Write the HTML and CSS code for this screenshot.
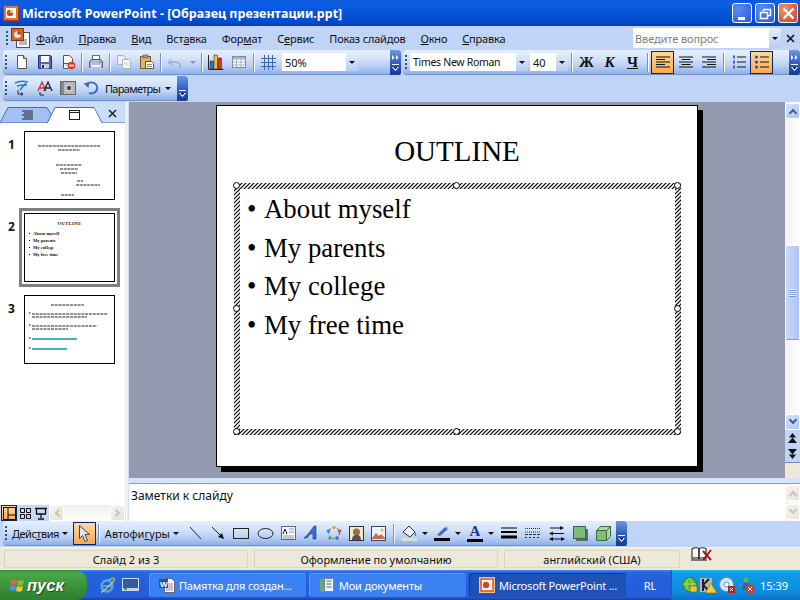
FILE: index.html
```html
<!DOCTYPE html>
<html lang="ru">

<head>
    <meta charset="UTF-8">
    <title>Microsoft PowerPoint</title>
    <link rel="stylesheet" href="styles.css">
</head>

<body>
    <!-- title bar -->
    <div class="titlebar">
        <svg class="app-icon" width="16" height="16" viewBox="0 0 16 16"><rect x="0.5" y="0.5" width="15" height="15" fill="#e8703a" stroke="#a83c14"/><rect x="3" y="3" width="10" height="10" fill="#fff"/><circle cx="7" cy="8" r="3.2" fill="#d0491b"/><path d="M7 8V4.8A3.2 3.2 0 0 1 10.2 8z" fill="#f8c070"/></svg>
        <span class="title-text">Microsoft PowerPoint - [Образец презентации.ppt]</span>
        <div class="win-btns">
            <div class="win-btn"><svg width="19" height="19" viewBox="0 0 19 19"><rect x="5" y="13" width="7" height="3" fill="#fff"/></svg></div>
            <div class="win-btn"><svg width="19" height="19" viewBox="0 0 19 19"><path d="M7.5 5.5h7v6h-3M7.5 5.5v2" fill="none" stroke="#fff" stroke-width="1.5"/><rect x="4.5" y="8.5" width="7" height="6" fill="none" stroke="#fff" stroke-width="1.5"/></svg></div>
            <div class="win-btn win-close"><svg width="19" height="19" viewBox="0 0 19 19"><path d="M4.5 4.5l10 10M14.5 4.5l-10 10" stroke="#fff" stroke-width="2.2"/></svg></div>
        </div>
    </div>

    <!-- menu -->
    <div class="menubar">
        <div class="grip menu-grip"></div>
        <svg class="doc-icon" width="19" height="20" viewBox="0 0 19 20"><rect x="5.5" y="4.5" width="13" height="15" fill="#fff" stroke="#456"/><path d="M8 12h8M8 14h8M8 16h8" stroke="#678"/><rect x="0.5" y="0.5" width="12" height="12" fill="#d4622c" stroke="#8a3010"/><circle cx="6.5" cy="6.5" r="3.5" fill="#fbe0c8"/><path d="M6.5 6.5V3a3.5 3.5 0 0 1 3.5 3.5z" fill="#b93a10"/></svg>
        <div class="menu-items">
            <span class="menu-item"><u>Ф</u>айл</span>
            <span class="menu-item"><u>П</u>равка</span>
            <span class="menu-item"><u>В</u>ид</span>
            <span class="menu-item">Вст<u>а</u>вка</span>
            <span class="menu-item">Фор<u>м</u>ат</span>
            <span class="menu-item">С<u>е</u>рвис</span>
            <span class="menu-item">Показ слай<u>д</u>ов</span>
            <span class="menu-item"><u>О</u>кно</span>
            <span class="menu-item"><u>С</u>правка</span>
        </div>
        <div class="help-box">
            <span class="help-text">Введите вопрос</span>
            <div class="combo-arrow"><i class="arrow-down"></i></div>
        </div>
        <svg class="menu-close" width="9" height="9" viewBox="0 0 9 9"><path d="M1 1l7 7M8 1l-7 7" stroke="#111" stroke-width="1.6"/></svg>
    </div>

    <!-- standard + formatting toolbars -->
    <div class="toolrow">
        <div class="toolbar tb-standard">
            <div class="grip"></div>
            <div class="btn"><svg width="16" height="16" viewBox="0 0 16 16"><path d="M3.5 1.5h6l3 3v10h-9z" fill="#fff" stroke="#555"/><path d="M9.5 1.5v3h3" fill="#dde" stroke="#555"/></svg></div>
            <div class="btn"><svg width="16" height="16" viewBox="0 0 16 16"><path d="M1.5 1.5h12l1 1v12h-13z" fill="#5a62b8" stroke="#2a3068"/><rect x="4" y="2" width="8" height="6" fill="#fff"/><rect x="4" y="10" width="8" height="4.500" fill="#c8cce0"/><rect x="5" y="11" width="2" height="3" fill="#334"/></svg></div>
            <div class="btn"><svg width="16" height="16" viewBox="0 0 16 16"><path d="M3.500 1.500h6l3 3v5h-9z" fill="#fff" stroke="#555"/><path d="M3.500 9v5.500h5" fill="#fff" stroke="#555"/><circle cx="11.500" cy="11.500" r="3.800" fill="#d93a26"/><rect x="9" y="10.700" width="5" height="1.600" fill="#fff"/></svg></div>
            <div class="sep"></div>
            <div class="btn"><svg width="16" height="16" viewBox="0 0 16 16"><path d="M4.500 1.500h7v4h-7z" fill="#fff" stroke="#667"/><path d="M1.500 8l2-2.500h9l2 2.500v5h-13z" fill="#b8bcc8" stroke="#556"/><rect x="3" y="11" width="10" height="2.500" fill="#eef"/><rect x="11" y="7.500" width="2" height="1.500" fill="#3fb03f"/></svg></div>
            <div class="sep"></div>
            <div class="btn"><svg width="16" height="16" viewBox="0 0 16 16"><path d="M1.500 1.500h6l2 2v7h-8z" fill="#eef" stroke="#a8b0c0"/><path d="M6.500 5.500h6l2 2v7h-8z" fill="#fff" stroke="#a8b0c0"/><path d="M8 9h5M8 11h5" stroke="#c0c8d8"/></svg></div>
            <div class="btn"><svg width="16" height="16" viewBox="0 0 16 16"><rect x="1.500" y="2.500" width="10" height="12" fill="#e3b45a" stroke="#7a5a20"/><rect x="4" y="1" width="5" height="3" fill="#999" stroke="#555" stroke-width="0.600"/><path d="M6.500 7.500h6l2 2v5h-8z" fill="#fff" stroke="#555"/><path d="M8 10.500h5M8 12.500h5" stroke="#888"/></svg></div>
            <div class="sep"></div>
            <div class="btn"><svg width="16" height="16" viewBox="0 0 16 16"><path d="M4 5.500L2 8.500l3 2.500M2.500 8h6c3 0 5 1.500 4.500 6" fill="none" stroke="#a9b4c8" stroke-width="2"/></svg></div>
            <div class="btn-arrow"><i class="arrow-down faded"></i></div>
            <div class="sep"></div>
            <div class="btn"><svg width="16" height="16" viewBox="0 0 16 16"><rect x="2" y="7" width="3.500" height="8" fill="#3c6cc4" stroke="#123"  stroke-width="0.500"/><rect x="6" y="1" width="3.500" height="14" fill="#e8c238" stroke="#123" stroke-width="0.500"/><rect x="10" y="4" width="3.500" height="11" fill="#cc3a2c" stroke="#123" stroke-width="0.500"/><path d="M0.500 1v14.500h15" fill="none" stroke="#223"/></svg></div>
            <div class="btn"><svg width="16" height="14" viewBox="0 0 16 14"><rect x="1.500" y="1.500" width="13" height="11" fill="#fff" stroke="#7f8ba0"/><rect x="2" y="2" width="12" height="2.500" fill="#a6b8d8"/><path d="M5.500 4v8M10 4v8M2 7h12M2 10h12" stroke="#a8b4c8"/></svg></div>
            <div class="sep sep-wide"></div>
            <div class="btn"><svg width="15" height="15" viewBox="0 0 15 15"><path d="M0 3.500h15M0 7.500h15M0 11.500h15M3.500 0v15M7.500 0v15M11.500 0v15" stroke="#3f68b4"/></svg></div>
            <div class="combo zoom-combo">
                <span class="combo-text">50%</span>
                <div class="combo-arrow"><i class="arrow-down"></i></div>
            </div>
            <div class="chevron chevron-double">
                <svg width="8" height="5" viewBox="0 0 8 5"><path d="M0 0l2.500 2.500L0 5zM4 0l2.500 2.500L4 5z" fill="#fff"/></svg>
                <svg width="7" height="7" viewBox="0 0 7 7"><path d="M0 0h7v1H0z" fill="#fff"/><path d="M0 3h7L3.500 7z" fill="#fff"/><path d="M1.500 3h4L3.500 5.500z" fill="#111"/></svg>
            </div>
        </div>

        <div class="toolbar tb-format">
            <div class="grip"></div>
            <div class="combo font-combo">
                <span class="combo-text font-name">Times New Roman</span>
                <div class="combo-arrow"><i class="arrow-down"></i></div>
            </div>
            <div class="combo size-combo">
                <span class="combo-text">40</span>
                <div class="combo-arrow"><i class="arrow-down"></i></div>
            </div>
            <div class="sep"></div>
            <div class="btn fmt-letter fmt-bold">Ж</div>
            <div class="btn fmt-letter fmt-italic">К</div>
            <div class="btn fmt-letter fmt-under"><u>Ч</u></div>
            <div class="sep"></div>
            <div class="btn btn-on"><svg width="16" height="13" viewBox="0 0 16 13"><path d="M1 1h14M1 3.500h9M1 6h14M1 8.500h9M1 11h14" stroke="#111"/></svg></div>
            <div class="btn"><svg width="16" height="13" viewBox="0 0 16 13"><path d="M1 1h14M3.500 3.500h9M1 6h14M3.500 8.500h9M1 11h14" stroke="#111"/></svg></div>
            <div class="btn"><svg width="16" height="13" viewBox="0 0 16 13"><path d="M1 1h14M6 3.500h9M1 6h14M6 8.500h9M1 11h14" stroke="#111"/></svg></div>
            <div class="sep"></div>
            <div class="btn"><svg width="16" height="16" viewBox="0 0 16 16"><path d="M6 3h9M6 8h9M6 13h9" stroke="#111"/><path d="M2 1.500h2v3H2zM2 6.500h2v3H2zM2 11.500h2v3H2z" fill="#3f68b4"/></svg></div>
            <div class="btn btn-on"><svg width="16" height="16" viewBox="0 0 16 16"><path d="M6 3h9M6 8h9M6 13h9" stroke="#111"/><circle cx="2.500" cy="3" r="1.500" fill="#234c9c"/><circle cx="2.500" cy="8" r="1.500" fill="#234c9c"/><circle cx="2.500" cy="13" r="1.500" fill="#234c9c"/></svg></div>
            <div class="chevron chevron-double">
                <svg width="8" height="5" viewBox="0 0 8 5"><path d="M0 0l2.500 2.500L0 5zM4 0l2.500 2.500L4 5z" fill="#fff"/></svg>
                <svg width="7" height="7" viewBox="0 0 7 7"><path d="M0 0h7v1H0z" fill="#fff"/><path d="M0 3h7L3.500 7z" fill="#fff"/><path d="M1.500 3h4L3.500 5.500z" fill="#111"/></svg>
            </div>
        </div>
    </div>

    <!-- picture / design toolbar -->
    <div class="toolrow">
        <div class="toolbar tb-design">
            <div class="grip"></div>
            <div class="btn"><svg width="16" height="16" viewBox="0 0 16 16"><path d="M1 3c4-2 9-2 13-1M3 6c3-1 7-1 10-1M12 3L6 10" fill="none" stroke="#2a7ac8" stroke-width="1.500"/><path d="M4 10v4h5M7 12.500L9 14l-2 1.500" fill="none" stroke="#222"/></svg></div>
            <div class="btn"><svg width="16" height="16" viewBox="0 0 16 16"><path d="M1 11L5 2l4 9M2.500 8h5" fill="none" stroke="#d42c2c" stroke-width="1.300"/><path d="M7 11l4-9 4 9M8.500 8h5" fill="none" stroke="#222" stroke-width="1.300"/><path d="M3 12v3h4" fill="none" stroke="#222"/></svg></div>
            <div class="btn"><svg width="16" height="16" viewBox="0 0 16 16"><rect x="0.500" y="1.500" width="15" height="13" fill="#b8b8b8" stroke="#666"/><rect x="1" y="2" width="3" height="12" fill="#888"/><circle cx="9" cy="8" r="3" fill="#555" stroke="#eee"/></svg></div>
            <div class="btn"><svg width="16" height="16" viewBox="0 0 16 16"><path d="M4 4a6 5.500 0 1 1 2 9" fill="none" stroke="#3c6cc4" stroke-width="2"/><path d="M0.500 3.500l6-1.500-1 6z" fill="#3c6cc4"/></svg></div>
            <span class="tb-label params">Параметры</span>
            <i class="arrow-down"></i>
            <div class="chevron">
                <svg width="7" height="7" viewBox="0 0 7 7"><path d="M0 0h7v1H0z" fill="#fff"/><path d="M0 3h7L3.500 7z" fill="#fff"/><path d="M1.500 3h4L3.500 5.500z" fill="#111"/></svg>
            </div>
        </div>
    </div>

    <!-- main area -->
    <div class="work">
        <div class="left-pane">
            <svg class="tabs" width="125" height="21" viewBox="0 0 125 21">
                <rect width="125" height="21" fill="#c9dcf9"/>
                <path d="M0 21L8 5.500H47L52 14 49 21z" fill="#a3c0f5" stroke="#3f6cb6"/>
                <path d="M47 21.500L55 5.500H94L102 21H125" fill="#fff" stroke="#3f6cb6"/>
                <path d="M48 21l8-15h38l7 15z" fill="#fff"/>
                <path d="M22 9h11M24 11h9M22 13h11M24 15h9M22 17h11" stroke="#222"/>
                <rect x="69.500" y="8.500" width="10" height="9" fill="#fff" stroke="#222"/>
                <path d="M70 10.500h9" stroke="#222"/>
                <path d="M109 8l7 7M116 8l-7 7" stroke="#222" stroke-width="1.500"/>
            </svg>

            <div class="thumbs">
                <div class="thumb-row">
                    <span class="thumb-num">1</span>
                    <div class="thumb-frame">
                        <svg class="thumb" width="91" height="69" viewBox="0 0 91 69">
                            <rect x="0.500" y="0.500" width="90" height="68" fill="#fff" stroke="#000"/>
                            <g stroke="#222" stroke-width="1.100" stroke-dasharray="3 0.700">
                                <path d="M14 15h62M34 19h22M32 34h26M36 38h18M37 42h16M53 50h6M52 54h24M37 64h13"/>
                            </g>
                        </svg>
                    </div>
                </div>
                <div class="thumb-row">
                    <span class="thumb-num">2</span>
                    <div class="thumb-frame frame-on">
                        <div class="thumb thumb-mini">
                            <div class="mini-title">OUTLINE</div>
                            <div class="mini-line">About myself</div>
                            <div class="mini-line">My parents</div>
                            <div class="mini-line">My college</div>
                            <div class="mini-line">My free time</div>
                        </div>
                    </div>
                </div>
                <div class="thumb-row">
                    <span class="thumb-num">3</span>
                    <div class="thumb-frame">
                        <svg class="thumb" width="91" height="69" viewBox="0 0 91 69">
                            <rect x="0.500" y="0.500" width="90" height="68" fill="#fff" stroke="#000"/>
                            <g stroke="#222" stroke-width="1.100" stroke-dasharray="3 0.800">
                                <path d="M27 10h33M8 19h76M8 22h55M8 31h65M8 34h36"/>
                            </g>
                            <path d="M8 44h45M8 54h35" stroke="#0a9a9a" stroke-width="1.500"/>
                            <path d="M5 18h1.500M5 30h1.500M5 43h1.500M5 53h1.500" stroke="#000"/>
                        </svg>
                    </div>
                </div>
            </div>

            <div class="viewbar">
                <div class="view-btn view-on"><svg width="13" height="13" viewBox="0 0 13 13"><rect x="0.500" y="0.500" width="12" height="12" fill="none" stroke="#111"/><path d="M5 1v11M5 8h7" stroke="#111"/></svg></div>
                <div class="view-btn"><svg width="13" height="13" viewBox="0 0 13 13"><path d="M1.500 1.500h4v4h-4zM7.500 1.500h4v4h-4zM1.500 7.500h4v4h-4zM7.500 7.500h4v4h-4z" fill="none" stroke="#111"/></svg></div>
                <div class="view-btn"><svg width="14" height="13" viewBox="0 0 14 13"><path d="M1 1.500h12M2.500 2v5h9V2M7 7v4M4 12h6" fill="none" stroke="#111" stroke-width="1.300"/></svg></div>
                <div class="hscroll">
                    <div class="sb-btn sb-disabled"><i class="chev chev-left"></i></div>
                    <div class="sb-btn sb-disabled"><i class="chev chev-right"></i></div>
                </div>
            </div>
        </div>

        <div class="v-split"></div>

        <div class="right-pane">
            <div class="editor">
                <div class="canvas">
                    <div class="slide">
                        <h1 class="slide-title">OUTLINE</h1>
                        <div class="sel-box">
                            <svg class="hatch" width="447" height="252">
                                <defs>
                                    <pattern id="hatch-lines" width="4" height="4" patternUnits="userSpaceOnUse">
                                        <path d="M-1 1L1 -1M0 4L4 0M3 5L5 3" stroke="#000" stroke-width="1.200"/>
                                    </pattern>
                                </defs>
                                <rect width="447" height="252" fill="#fff"/>
                                <rect width="447" height="252" fill="url(#hatch-lines)"/>
                            </svg>
                            <ul class="slide-list">
                                <li>About myself</li>
                                <li>My parents</li>
                                <li>My college</li>
                                <li>My free time</li>
                            </ul>
                            <i class="handle h-tl"></i><i class="handle h-tc"></i><i class="handle h-tr"></i>
                            <i class="handle h-ml"></i><i class="handle h-mr"></i>
                            <i class="handle h-bl"></i><i class="handle h-bc"></i><i class="handle h-br"></i>
                        </div>
                    </div>
                </div>
                <div class="vscroll">
                    <div class="sb-btn sb-top"><i class="chev chev-up"></i></div>
                    <div class="sb-track">
                        <div class="sb-thumb"><i class="thumb-lines"></i></div>
                    </div>
                    <div class="sb-btn"><i class="chev chev-down"></i></div>
                    <div class="slide-nav">
                        <svg width="9" height="10" viewBox="0 0 9 10"><path d="M4.500 0l3.500 4.500H1zM4.500 4.500L9 10H0z" fill="#111"/></svg>
                        <svg width="9" height="10" viewBox="0 0 9 10"><path d="M0 0h9L4.500 5.500zM1 5.500h7L4.500 10z" fill="#111"/></svg>
                    </div>
                    <div class="sb-foot"></div>
                </div>
            </div>
            <div class="h-split"></div>
            <div class="notes">
                <span class="notes-text">Заметки к слайду</span>
                <div class="notes-scroll">
                    <div class="sb-btn sb-disabled"><i class="chev chev-up"></i></div>
                    <div class="sb-btn sb-disabled"><i class="chev chev-down"></i></div>
                </div>
            </div>
        </div>
    </div>

    <!-- drawing toolbar -->
    <div class="toolrow draw-row">
        <div class="toolbar tb-draw">
            <div class="grip"></div>
            <span class="tb-label actions">Дейс<u>т</u>вия</span>
            <i class="arrow-down"></i>
            <div class="btn btn-on btn-cursor"><svg width="13" height="19" viewBox="0 0 13 19"><path d="M1.500 1.500v13l3-3 2.500 6 2.500-1-2.500-6h4.500z" fill="#dfe4ee" stroke="#445"/></svg></div>
            <div class="sep"></div>
            <span class="tb-label autoshapes">Автофи<u>г</u>уры</span>
            <i class="arrow-down"></i>
            <div class="draw-tools">
                <svg width="16" height="16" viewBox="0 0 16 16"><path d="M3 2l11 12" stroke="#222"/></svg>
                <svg width="16" height="16" viewBox="0 0 16 16"><path d="M2 2l9 9" stroke="#222"/><path d="M14 14l-6-2 4-4z" fill="#111"/></svg>
                <svg width="17" height="13" viewBox="0 0 17 13"><rect x="0.500" y="1.500" width="15" height="10" fill="none" stroke="#222"/></svg>
                <svg width="17" height="13" viewBox="0 0 17 13"><ellipse cx="8.500" cy="6.500" rx="7.500" ry="5" fill="none" stroke="#222"/></svg>
                <svg width="15" height="14" viewBox="0 0 15 14"><rect x="0.500" y="0.500" width="14" height="13" fill="#f4f6fb" stroke="#667"/><path d="M2 8l2-5 2 5" fill="none" stroke="#123"/><path d="M8 3h5M8 6h5M2 10h11M2 12h11" stroke="#99a"/></svg>
                <svg width="16" height="16" viewBox="0 0 16 16"><path d="M1 13C5 10 8 5 11 1h2v13h-3V9H7l-3 4z" fill="#3c6cc4" stroke="#1a3a80" stroke-width="0.600"/></svg>
                <svg width="16" height="16" viewBox="0 0 16 16"><circle cx="8" cy="8" r="5.500" fill="none" stroke="#556" stroke-dasharray="2 2"/><circle cx="8" cy="2.500" r="1.800" fill="#e8a53a"/><circle cx="13.500" cy="6" r="1.800" fill="#d4503c"/><circle cx="11" cy="13" r="1.800" fill="#5a62b8"/><circle cx="4" cy="13" r="1.800" fill="#5aa85a"/><circle cx="2.500" cy="6" r="1.800" fill="#3c8cc4"/></svg>
                <svg width="15" height="15" viewBox="0 0 15 15"><rect x="0.500" y="0.500" width="14" height="14" fill="#f6e6c8" stroke="#334"/><circle cx="7.500" cy="6" r="3.500" fill="#9a6a50"/><path d="M3 14c0-4 2-5 4.500-5s4.500 1 4.500 5z" fill="#555"/></svg>
                <svg width="15" height="15" viewBox="0 0 15 15"><rect x="0.500" y="0.500" width="14" height="14" fill="#eef2fa" stroke="#445"/><path d="M1 12l4-5 3 3 2-2 4 4v1H1z" fill="#c86a5a"/><circle cx="11" cy="4" r="1.500" fill="#e8c238"/></svg>
            </div>
            <div class="sep draw-sep"></div>
            <svg class="fill-ic" width="15" height="16" viewBox="0 0 15 16"><rect x="0" y="13" width="15" height="3" fill="#cfe6d6"/><path d="M1 7l6-6 6 6-5 5z" fill="#eef" stroke="#334"/><path d="M13 7c1.500 2 1.500 4 .5 4s-1-2-.5-4z" fill="#3c6cc4"/></svg>
            <i class="arrow-down ad-fill"></i>
            <svg class="pen-ic" width="16" height="16" viewBox="0 0 16 16"><path d="M3 10l8-8 3 2-8 7z" fill="#3c6cc4"/><path d="M11 2l3 2 1-2-2-1z" fill="#e8c238"/><rect x="0" y="13" width="16" height="3" fill="#000"/></svg>
            <i class="arrow-down ad-pen"></i>
            <div class="font-color-ic"><span class="fc-letter">A</span><i class="fc-bar"></i></div>
            <i class="arrow-down ad-font"></i>
            <svg class="line-ic" width="16" height="12" viewBox="0 0 16 12"><path d="M0 1h16" stroke="#000"/><path d="M0 5h16" stroke="#000" stroke-width="2"/><path d="M0 10h16" stroke="#000" stroke-width="3"/></svg>
            <svg class="dash-ic" width="16" height="12" viewBox="0 0 16 12"><path d="M0 1.500h16M0 5h16" stroke="#333" stroke-dasharray="1 1"/><path d="M0 7.500h16" stroke="#333" stroke-dasharray="3 1"/><path d="M0 10.500h16" stroke="#333" stroke-dasharray="2 2"/></svg>
            <svg class="arrows-ic" width="16" height="15" viewBox="0 0 16 15"><path d="M1 2h13M1 7.500h14M1 13h14" stroke="#111"/><path d="M15 2l-4-2v4zM0 7.500l4-2v4zM0 13l4-2v4zM16 13l-4-2v4z" fill="#111"/></svg>
            <svg class="shadow-ic" width="15" height="15" viewBox="0 0 15 15"><rect x="3" y="3" width="12" height="12" fill="#667"/><rect x="0.500" y="0.500" width="12" height="12" fill="#7cbc7c" stroke="#3a6a3a"/></svg>
            <svg class="cube-ic" width="15" height="15" viewBox="0 0 15 15"><path d="M0.500 4.500l4-4h10v10l-4 4h-10z" fill="#a8d8a8" stroke="#3a6a3a"/><path d="M0.500 4.500h10v10M10.500 4.500l4-4" fill="none" stroke="#3a6a3a"/><rect x="1" y="5" width="9" height="9" fill="#7cbc7c"/></svg>
            <div class="chevron">
                <svg width="7" height="7" viewBox="0 0 7 7"><path d="M0 0h7v1H0z" fill="#fff"/><path d="M0 3h7L3.500 7z" fill="#fff"/><path d="M1.500 3h4L3.500 5.500z" fill="#111"/></svg>
            </div>
        </div>
    </div>

    <!-- status bar -->
    <div class="statusbar">
        <div class="st-panel st-1">Слайд 2 из 3</div>
        <div class="st-panel st-2">Оформление по умолчанию</div>
        <div class="st-panel st-3">английский (США)</div>
        <div class="st-panel st-4">
            <svg width="21" height="15" viewBox="0 0 21 15"><path d="M1 1.500c3-1 5-1 7 0v10c-2-1-4-1-7 0zM8 1.500c2-1 5-1 7 0v10c-2-1-5-1-7 0z" fill="#fff" stroke="#111"/><path d="M0 13h16" stroke="#111"/><path d="M12 4l8 9M20 3l-8 10" stroke="#a01818" stroke-width="2"/></svg>
        </div>
    </div>

    <!-- taskbar -->
    <div class="taskbar">
        <div class="start">
            <svg width="16" height="15" viewBox="0 0 16 15"><path d="M1 2c2-1 4-1 6 0l-1 5C4 6 2 6 0 7z" fill="#e8603c"/><path d="M8 2c2 1 4 1 6 0l-1 5c-2 1-4 1-6 0z" fill="#7cc040"/><path d="M0 8c2-1 4-1 6 0l-1 5c-2-1-4-1-6 0z" fill="#4c90e8"/><path d="M7 8c2 1 4 1 6 0l-1 5c-2 1-4 1-6 0z" fill="#f0c830"/></svg>
            <span class="start-text">пуск</span>
        </div>
        <div class="quick">
            <svg width="17" height="17" viewBox="0 0 17 17"><circle cx="8" cy="9" r="5.500" fill="none" stroke="#4aa8f0" stroke-width="2.500"/><path d="M2 9h11" stroke="#4aa8f0" stroke-width="2"/><path d="M3 14C1 17 5 14 14 5c3-4 0-5-4-2" fill="none" stroke="#e8c238" stroke-width="1.200"/></svg>
            <svg width="17" height="14" viewBox="0 0 17 14"><rect x="0.500" y="0.500" width="16" height="12" fill="#2c5f9c" stroke="#cfd8e8"/><path d="M1 10h15v2H1z" fill="#c8d0dc"/><rect x="2" y="10" width="3" height="2" fill="#4c9c4c"/></svg>
        </div>
        <div class="task">
            <svg width="16" height="16" viewBox="0 0 16 16"><path d="M5.500 1.500h7l3 3v11h-10z" fill="#fff" stroke="#667"/><path d="M7 7h7M7 9h7M7 11h7M7 13h7" stroke="#88a"/><rect x="0" y="2" width="9" height="9" fill="#2a4ea8"/><text class="w-letter" x="1" y="9.500">W</text></svg>
            <span class="task-text">Памятка для создан...</span>
        </div>
        <div class="task">
            <svg width="16" height="16" viewBox="0 0 16 16"><path d="M1 2l5-1v14l-5-1z" fill="#62a87c"/><rect x="5.500" y="1.500" width="9" height="13" fill="#eef3fb" stroke="#788"/><path d="M7.500 4h5M7.500 7h5M7.500 10h5" stroke="#567"/></svg>
            <span class="task-text">Мои документы</span>
        </div>
        <div class="task task-on">
            <svg width="16" height="16" viewBox="0 0 16 16"><rect x="0.500" y="0.500" width="15" height="15" fill="#e8703a" stroke="#f6c0a0"/><rect x="3" y="3" width="10" height="10" fill="#fff"/><circle cx="7" cy="8" r="3.200" fill="#d0491b"/></svg>
            <span class="task-text">Microsoft PowerPoint ...</span>
        </div>
        <div class="lang">RL</div>
        <div class="tray">
            <svg width="16" height="16" viewBox="0 0 16 16"><circle cx="7.500" cy="7.500" r="7" fill="#5cb82c" stroke="#2e7a1a"/><path d="M1 7h13M7.500 1c-4 4-4 9 0 13M7.500 1c4 4 4 9 0 13" fill="none" stroke="#c8f0a0" stroke-width="0.700"/><rect x="8" y="9" width="7" height="6" rx="1" fill="#f0c830" stroke="#806010" stroke-width="0.600"/></svg>
            <svg width="17" height="16" viewBox="0 0 17 16"><rect x="0" y="1" width="12" height="14" fill="#b8b8b0"/><path d="M3 2v12M3 8l6-6M3 8l6 6" stroke="#222" stroke-width="2" fill="none"/><path d="M11 6l6 10H5z" fill="#f0d040" stroke="#806010" stroke-width="0.600"/></svg>
            <svg width="17" height="16" viewBox="0 0 17 16"><circle cx="7.500" cy="7.500" r="7" fill="#d8e8f8" stroke="#5a90c8"/><circle cx="7.500" cy="7.500" r="2.500" fill="#fff" stroke="#5a90c8"/><rect x="9" y="9" width="7" height="7" fill="#a82828"/><path d="M11 11l3 3M14 11l-3 3" stroke="#fff"/></svg>
            <svg width="17" height="17" viewBox="0 0 17 17"><circle cx="8" cy="3" r="2.500" fill="#5cb82c"/><circle cx="3" cy="8" r="2.500" fill="#3c8cc4"/><path d="M5 6l6 0-1 7H4z" fill="#2a6aa8"/><circle cx="12" cy="12" r="4.500" fill="#d83828"/><path d="M10 10l4 4M14 10l-4 4" stroke="#fff"/></svg>
            <span class="clock">15:39</span>
        </div>
    </div>
</body>

</html>
```

FILE: styles.css
```css
* {
    margin: 0;
    padding: 0;
    box-sizing: border-box;
}

body {
    width: 800px;
    height: 600px;
    overflow: hidden;
    display: flex;
    flex-direction: column;
    background-color: #bfd4f6;
    font-family: "Noto Sans", "DejaVu Sans", sans-serif;
    font-size: 11px;
    color: #111;
}

svg {
    display: block;
    flex: none;
}

/* title bar */
.titlebar {
    height: 26px;
    flex: none;
    display: flex;
    align-items: center;
    padding: 0 2px 0 3px;
    background: linear-gradient(#0a57d6 0, #0a5fe4 8%, #0553d8 55%, #0349c8 88%, #013ea8 100%);
}

.title-text {
    margin-left: 3px;
    color: #fff;
    font-family: "Noto Sans", sans-serif;
    font-size: 12.5px;
    font-weight: bold;
    white-space: nowrap;
}

.win-btns {
    margin-left: auto;
    display: flex;
    gap: 3px;
}

.win-btn {
    width: 20px;
    height: 20px;
    border: 1px solid #fff;
    border-radius: 3px;
    background: radial-gradient(circle at 30% 30%, #5c8cf0, #2a5ad8);
}

.win-close {
    background: radial-gradient(circle at 30% 30%, #ec9070, #d0441c);
}

/* menu */
.menubar {
    height: 24px;
    flex: none;
    display: flex;
    align-items: center;
    padding-left: 6px;
    background-color: #bfd4f6;
}

.menu-grip {
    height: 12px;
}

.doc-icon {
    margin-left: 3px;
}

.menu-items {
    display: flex;
    gap: 15px;
    margin-left: 6px;
    letter-spacing: -0.2px;
    white-space: nowrap;
}

.help-box {
    width: 148px;
    height: 20px;
    margin-left: auto;
    margin-right: 5px;
    display: flex;
    align-items: center;
    background-color: #fff;
    padding-left: 2px;
    letter-spacing: -0.1px;
}

.help-text {
    color: #7f7f7f;
    flex: 1;
}

.menu-close {
    margin-right: 5px;
}

/* toolbars */
.toolrow {
    height: 26px;
    flex: none;
    display: flex;
    gap: 2px;
    padding-left: 3px;
}

.toolbar {
    height: 25px;
    display: flex;
    align-items: center;
    padding-left: 2px;
    border-radius: 4px 0 0 4px;
    background: linear-gradient(#e6f0fe 0, #d4e3fb 35%, #b6cdf4 70%, #8fb0e6 100%);
    border-bottom: 1px solid #6f8fcf;
}

.tb-standard {
    width: 398px;
}

.tb-format {
    width: 397px;
}

.tb-design {
    width: 185px;
}

.grip {
    width: 2px;
    height: 15px;
    flex: none;
    background: repeating-linear-gradient(#2a4f98 0 2px, transparent 2px 4px);
}

.btn {
    width: 23px;
    height: 23px;
    flex: none;
    display: flex;
    align-items: center;
    justify-content: center;
}

.tb-standard .grip,
.tb-design .grip {
    margin-right: 3px;
}

.tb-draw .grip {
    margin-right: 5px;
}

.btn-on {
    background: linear-gradient(#ffd9a0, #fba850);
    border: 1px solid #0a2468;
}

.btn-arrow {
    width: 13px;
    display: flex;
    justify-content: center;
}

.sep {
    width: 1px;
    height: 19px;
    flex: none;
    margin: 0 2px;
    background-color: #6f8fcf;
    box-shadow: 1px 0 0 #fff;
}

.sep-wide {
    margin: 0 3px;
}

.arrow-down {
    width: 0;
    height: 0;
    flex: none;
    display: block;
    border-left: 3px solid transparent;
    border-right: 3px solid transparent;
    border-top: 3px solid #111;
}

.faded {
    border-top-color: #8a98b0;
}

.combo {
    height: 18px;
    display: flex;
    align-items: center;
    background-color: #fff;
    flex: none;
}

.combo-text {
    flex: 1;
    padding-left: 3px;
    font-size: 11px;
    white-space: nowrap;
}

.font-name {
    font-size: 10.5px;
    letter-spacing: -0.3px;
}

.combo-arrow {
    width: 12px;
    height: 100%;
    flex: none;
    display: flex;
    align-items: center;
    justify-content: center;
    background: linear-gradient(#e4edfb, #b8cdf0);
}

.zoom-combo {
    width: 76px;
    margin-left: 2px;
}

.font-combo {
    width: 118px;
    margin-left: 3px;
}

.size-combo {
    width: 38px;
    margin-left: 2px;
}

.chevron {
    width: 11px;
    height: 25px;
    margin-left: auto;
    flex: none;
    display: flex;
    flex-direction: column;
    align-items: center;
    justify-content: flex-end;
    padding-bottom: 4px;
    border-radius: 0 3px 3px 0;
    background: linear-gradient(#6f96e0, #2b5cc0 55%, #0f3a98);
}

.chevron-double {
    justify-content: space-between;
    padding: 5px 0 4px;
}

.fmt-letter {
    font-family: "Liberation Serif", serif;
    font-size: 15px;
    font-weight: bold;
}

.fmt-italic {
    font-style: italic;
}

.tb-format .grip {
    margin-right: 0;
}

.tb-format .sep {
    margin: 0 3px;
}

.tb-label {
    white-space: nowrap;
    font-size: 11px;
}

.params {
    margin-left: 3px;
    margin-right: 5px;
    letter-spacing: -0.7px;
}

/* work area */
.work {
    height: 419px;
    flex: none;
    display: flex;
}

.left-pane {
    width: 125px;
    display: flex;
    flex-direction: column;
    background-color: #fff;
}

.tabs {
    flex: none;
}

.thumbs {
    flex: 1;
    display: flex;
    flex-direction: column;
    gap: 3px;
    padding-top: 3px;
}

.thumb-row {
    display: flex;
    padding-left: 8px;
}

.thumb-num {
    width: 11px;
    padding-top: 10px;
    font-size: 12px;
    font-weight: bold;
    color: #111;
}

.thumb-frame {
    width: 101px;
    height: 79px;
    padding: 2px;
    border: 3px solid transparent;
}

.frame-on {
    border-color: #808080;
}

.thumb-mini {
    width: 91px;
    height: 69px;
    border: 1px solid #000;
    padding: 6px 0 0 8px;
    background-color: #fff;
    font-family: "Liberation Serif", serif;
    font-size: 4.6px;
    font-weight: bold;
    line-height: 7px;
}

.mini-title {
    margin-left: -8px;
    margin-bottom: 3px;
    text-align: center;
    letter-spacing: 0.4px;
}

.mini-line {
    position: relative;
}

.mini-line::before {
    content: "";
    position: absolute;
    left: -4px;
    top: 3px;
    width: 1px;
    height: 1px;
    background-color: #000;
}

.viewbar {
    height: 16px;
    flex: none;
    display: flex;
    align-items: center;
    padding-left: 1px;
    background-color: #c4d9f8;
}

.view-btn {
    width: 16px;
    height: 16px;
    flex: none;
    display: flex;
    align-items: center;
    justify-content: center;
}

.view-on {
    border: 1px solid #0a2468;
    background: linear-gradient(#ffd9a0, #fba850);
}

.hscroll {
    margin-left: auto;
    width: 77px;
    height: 16px;
    display: flex;
    justify-content: space-between;
    background: linear-gradient(#f2f0ea, #fdfdfb);
}

.v-split {
    width: 4px;
    flex: none;
    background: linear-gradient(90deg, #fff, #c8dcf9);
    border-left: 1px solid #dbe7fb;
}

.right-pane {
    flex: 1;
    display: flex;
    flex-direction: column;
}

.editor {
    height: 376px;
    flex: none;
    display: flex;
}

.canvas {
    flex: 1;
    padding: 3px 0 0 87px;
    background-color: #939ab0;
}

.slide {
    width: 482px;
    height: 362px;
    border: 1px solid #000;
    background-color: #fff;
    box-shadow: 5px 5px 0 #000;
    font-family: "Liberation Serif", serif;
}

.slide-title {
    height: 77px;
    padding-top: 28px;
    text-align: center;
    font-size: 29px;
    font-weight: normal;
    line-height: 34px;
    color: #000;
}

.sel-box {
    position: relative;
    width: 447px;
    height: 252px;
    margin-left: 17px;
    padding: 6px;
}

.hatch {
    position: absolute;
    left: 0;
    top: 0;
}

.slide-list {
    position: relative;
    list-style: none;
    height: 100%;
    padding: 1px 0 0 7px;
    background-color: #fff;
    font-size: 26.8px;
    line-height: 38.6px;
    color: #000;
}

.slide-list li {
    display: flex;
}

.slide-list li::before {
    content: "•";
    width: 17px;
    flex: none;
}

.handle {
    position: absolute;
    width: 7px;
    height: 7px;
    border: 1px solid #000;
    border-radius: 50%;
    background-color: #fff;
}

.h-tl { left: -1px; top: -1px; }
.h-tc { left: 219px; top: -1px; }
.h-tr { left: 440px; top: -1px; }
.h-ml { left: -1px; top: 122px; }
.h-mr { left: 440px; top: 122px; }
.h-bl { left: -1px; top: 245px; }
.h-bc { left: 219px; top: 245px; }
.h-br { left: 440px; top: 245px; }

/* scrollbars */
.vscroll {
    width: 15px;
    flex: none;
    display: flex;
    flex-direction: column;
    background: linear-gradient(90deg, #f3f1ec, #fefefe);
}

.sb-btn {
    width: 15px;
    height: 16px;
    flex: none;
    display: flex;
    align-items: center;
    justify-content: center;
    border: 1px solid #fff;
    border-radius: 2px;
    background: linear-gradient(135deg, #d3e1fb, #aec4f4);
}

.sb-top {
    margin-top: 1px;
}

.sb-disabled {
    background: linear-gradient(135deg, #f6f5f0, #e6e3d6);
}

.chev {
    display: block;
    width: 6px;
    height: 6px;
    border-left: 2px solid #4d6185;
    border-top: 2px solid #4d6185;
}

.chev-up {
    transform: translateY(2px) rotate(45deg);
}

.chev-down {
    transform: translateY(-2px) rotate(225deg);
}

.chev-left {
    transform: translateX(2px) rotate(-45deg);
}

.chev-right {
    transform: translateX(-2px) rotate(135deg);
}

.sb-disabled .chev {
    border-color: #c9c6b8;
}

.sb-track {
    flex: 1;
    padding-top: 126px;
}

.sb-thumb {
    width: 15px;
    height: 95px;
    display: flex;
    align-items: center;
    justify-content: center;
    border: 1px solid #fff;
    border-bottom-color: #7f9fd9;
    border-radius: 2px;
    background: linear-gradient(90deg, #c8d8fa, #aec4f4);
}

.thumb-lines {
    display: block;
    width: 7px;
    height: 8px;
    background: repeating-linear-gradient(#eef4ff 0 1px, #7c98d4 1px 2px);
}

.slide-nav {
    height: 33px;
    flex: none;
    display: flex;
    flex-direction: column;
    align-items: center;
    justify-content: center;
    gap: 6px;
    background-color: #bfd4f6;
    border-bottom: 1px solid #6f8fcf;
}

.sb-foot {
    height: 15px;
    flex: none;
    background-color: #ece9d8;
}

.h-split {
    height: 6px;
    flex: none;
    background-color: #d5e4fb;
    border-bottom: 1px solid #7f9fd9;
}

.notes {
    flex: 1;
    display: flex;
    justify-content: space-between;
    background-color: #fff;
}

.notes-text {
    padding: 3px 0 0 2px;
    font-size: 12px;
}

.notes-scroll {
    width: 15px;
    display: flex;
    flex-direction: column;
    justify-content: space-between;
    padding: 1px 0;
    background: linear-gradient(90deg, #f3f1ec, #fefefe);
}

/* drawing toolbar */
.draw-row {
    height: 26px;
    padding-top: 0;
}

.tb-draw {
    width: 624px;
}

.actions {
    margin-right: 3px;
    letter-spacing: -0.5px;
}

.btn-cursor {
    margin-left: 5px;
}

.autoshapes {
    margin-left: 4px;
    margin-right: 3px;
}

.draw-tools {
    display: flex;
    align-items: center;
    gap: 7px;
    margin-left: 8px;
}

.draw-sep {
    margin-left: 7px;
    margin-right: 8px;
}

.ad-fill,
.ad-pen,
.ad-font {
    margin: 0 6px 0 5px;
}

.font-color-ic {
    width: 16px;
    height: 18px;
    flex: none;
    display: flex;
    flex-direction: column;
    align-items: center;
}

.fc-letter {
    font-family: "Liberation Serif", serif;
    font-size: 15px;
    font-weight: bold;
    line-height: 14px;
    color: #1a3a90;
}

.fc-bar {
    display: block;
    width: 16px;
    height: 3px;
    margin-top: 1px;
    background-color: #000;
}

.line-ic {
    margin-left: 1px;
}

.dash-ic,
.arrows-ic,
.shadow-ic,
.cube-ic {
    margin-left: 8px;
}

/* status bar */
.statusbar {
    height: 23px;
    flex: none;
    display: flex;
    gap: 6px;
    padding: 2px 0 2px 4px;
    background-color: #ece9d8;
    border-top: 1px solid #f8f6ec;
}

.st-panel {
    display: flex;
    align-items: center;
    justify-content: center;
    border: 1px solid #dcd8c6;
    border-left-color: #d6d2c0;
    font-size: 11px;
    white-space: nowrap;
}

.st-1,
.st-2 {
    width: 244px;
}

.st-3 {
    width: 176px;
}

.st-4 {
    width: 30px;
    align-items: flex-start;
    margin-top: -3px;
    border: 0;
}

/* taskbar */
.taskbar {
    height: 30px;
    flex: none;
    display: flex;
    align-items: center;
    color: #fff;
    background: linear-gradient(#3f8cf3 0, #2566e0 8%, #245edb 50%, #245edb 88%, #1941a5 100%);
}

.start {
    width: 87px;
    height: 30px;
    flex: none;
    display: flex;
    align-items: center;
    gap: 1px;
    padding-left: 10px;
    border-radius: 0 12px 12px 0;
    background: linear-gradient(#3c8f3c 0, #4aa84a 12%, #3a923a 55%, #2f7f2f 100%);
}

.start-text {
    font-family: "Liberation Sans", sans-serif;
    font-size: 16.5px;
    font-weight: bold;
    font-style: italic;
    text-shadow: 1px 1px 1px #1a4a1a;
}

.quick {
    width: 62px;
    flex: none;
    display: flex;
    align-items: center;
    gap: 6px;
    padding-left: 12px;
}

.task {
    width: 157px;
    height: 24px;
    flex: none;
    display: flex;
    align-items: center;
    gap: 4px;
    margin-right: 3px;
    padding-left: 10px;
    border-radius: 3px;
    background-color: #3c81f3;
    box-shadow: inset 1px 1px 0 #5a98f6;
}

.task-on {
    background-color: #1e52b7;
    box-shadow: inset 1px 1px 1px #123a88;
}

.task-text {
    white-space: nowrap;
    font-size: 11px;
    letter-spacing: -0.2px;
}

.w-letter {
    fill: #fff;
    font-family: "Liberation Sans", sans-serif;
    font-size: 8px;
    font-weight: bold;
}

.lang {
    width: 42px;
    flex: none;
    text-align: center;
    font-size: 11px;
}

.tray {
    flex: 1;
    height: 30px;
    display: flex;
    align-items: center;
    gap: 2px;
    padding-left: 10px;
    border-left: 1px solid #0f5ec8;
    background: linear-gradient(#18b8f0 0, #0f9be8 10%, #0e8ee0 70%, #0c70c8 100%);
}

.clock {
    margin-left: 3px;
    white-space: nowrap;
}
```
